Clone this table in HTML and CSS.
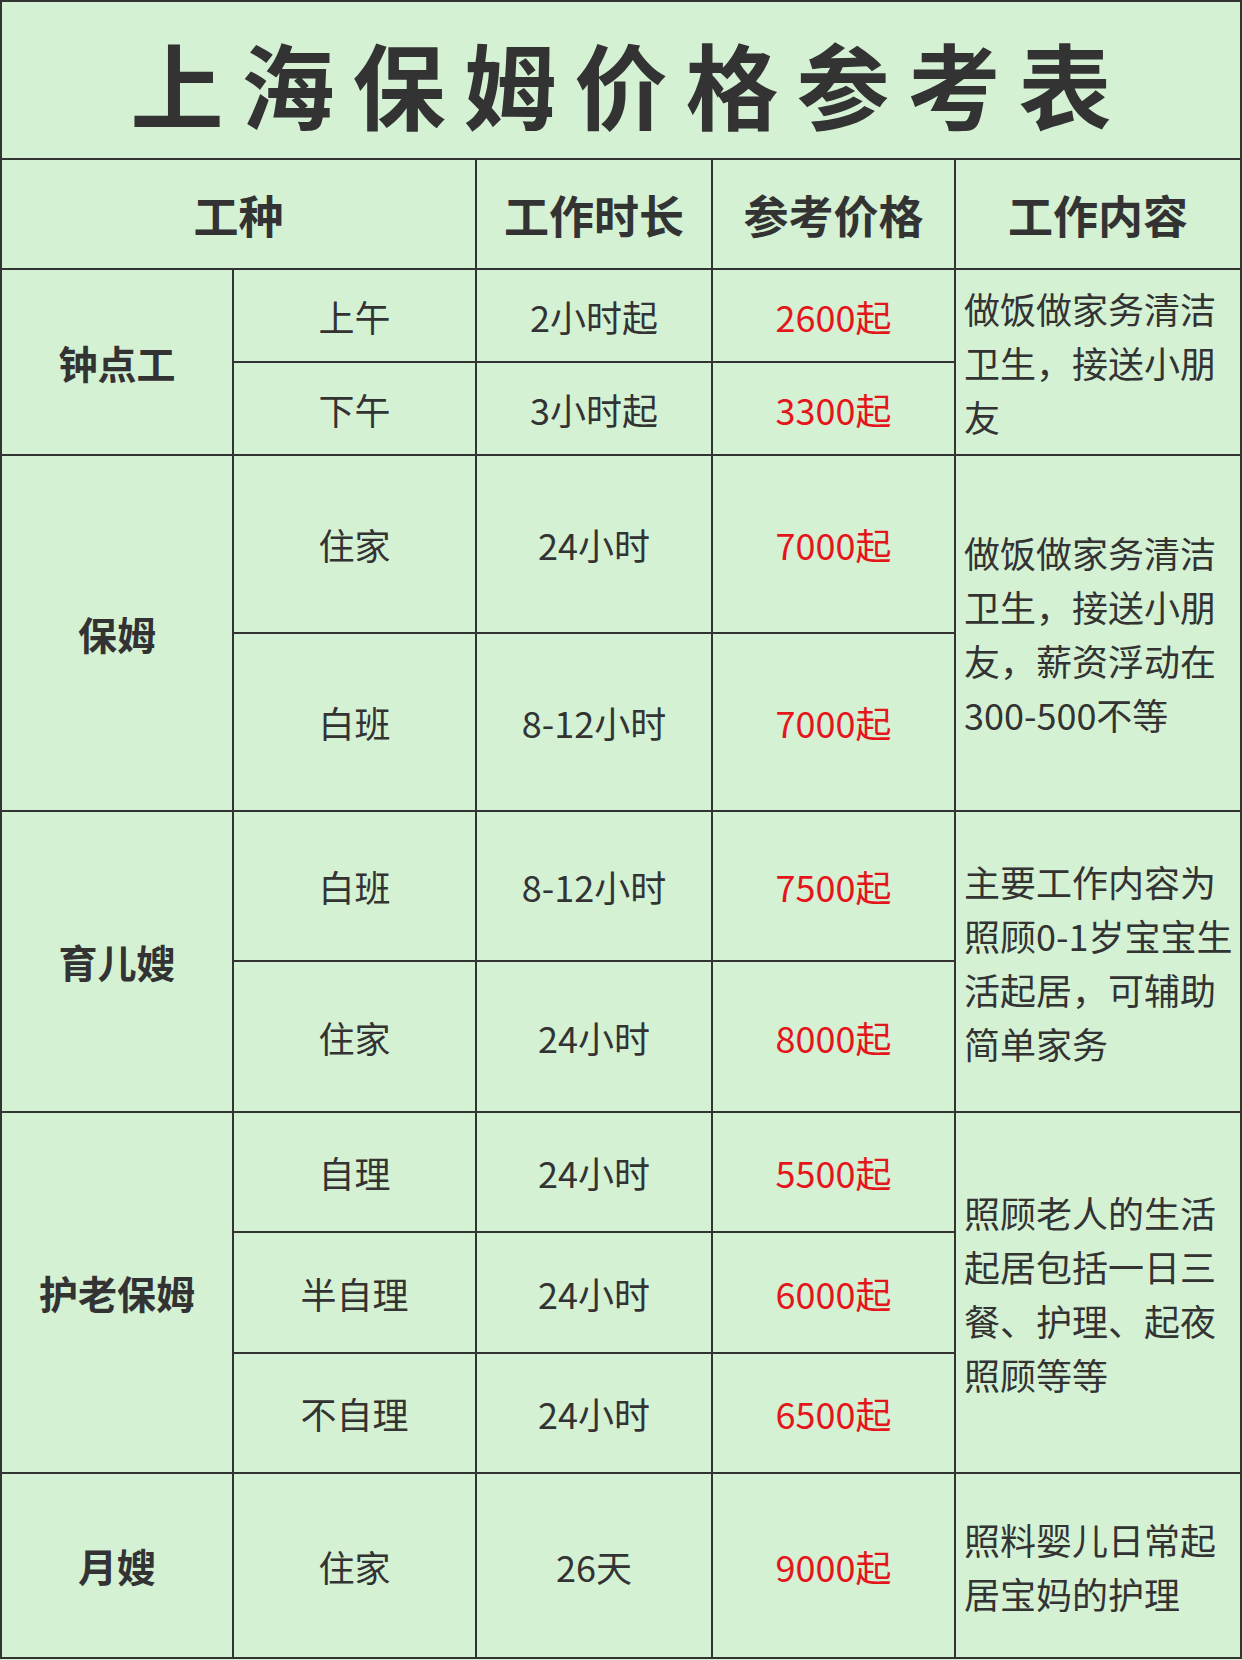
FILE: index.html
```html
<!DOCTYPE html>
<html lang="zh-CN">
<head>
<meta charset="utf-8">
<title>上海保姆价格参考表</title>
<link rel="stylesheet" href="styles.css">
</head>
<body>
<div class="sheet">
  <div class="cell title"><span class="title-text">上海保姆价格参考表</span></div>

  <div class="cell head span2">工种</div>
  <div class="cell head">工作时长</div>
  <div class="cell head">参考价格</div>
  <div class="cell head">工作内容</div>

  <div class="cell label rows2">钟点工</div>
  <div class="cell">上午</div>
  <div class="cell">2小时起</div>
  <div class="cell price">2600起</div>
  <div class="cell desc rows2"><p>做饭做家务清洁<br>卫生，接送小朋<br>友</p></div>
  <div class="cell">下午</div>
  <div class="cell">3小时起</div>
  <div class="cell price">3300起</div>

  <div class="cell label rows2">保姆</div>
  <div class="cell">住家</div>
  <div class="cell">24小时</div>
  <div class="cell price">7000起</div>
  <div class="cell desc rows2"><p>做饭做家务清洁<br>卫生，接送小朋<br>友，薪资浮动在<br>300-500不等</p></div>
  <div class="cell">白班</div>
  <div class="cell">8-12小时</div>
  <div class="cell price">7000起</div>

  <div class="cell label rows2">育儿嫂</div>
  <div class="cell">白班</div>
  <div class="cell">8-12小时</div>
  <div class="cell price">7500起</div>
  <div class="cell desc rows2"><p>主要工作内容为<br>照顾0-1岁宝宝生<br>活起居，可辅助<br>简单家务</p></div>
  <div class="cell">住家</div>
  <div class="cell">24小时</div>
  <div class="cell price">8000起</div>

  <div class="cell label rows3">护老保姆</div>
  <div class="cell">自理</div>
  <div class="cell">24小时</div>
  <div class="cell price">5500起</div>
  <div class="cell desc rows3"><p>照顾老人的生活<br>起居包括一日三<br>餐、护理、起夜<br>照顾等等</p></div>
  <div class="cell">半自理</div>
  <div class="cell">24小时</div>
  <div class="cell price">6000起</div>
  <div class="cell">不自理</div>
  <div class="cell">24小时</div>
  <div class="cell price">6500起</div>

  <div class="cell label">月嫂</div>
  <div class="cell">住家</div>
  <div class="cell">26天</div>
  <div class="cell price">9000起</div>
  <div class="cell desc"><p>照料婴儿日常起<br>居宝妈的护理</p></div>
</div>
</body>
</html>
```

FILE: styles.css
```css
html, body {
  margin: 0;
  padding: 0;
  background: #d4f1d4;
}

body {
  font-family: "Noto Sans CJK SC", "Noto Sans", sans-serif;
  color: #333333;
}

.sheet {
  width: 1242px;
  box-sizing: border-box;
  display: grid;
  grid-template-columns: 230px 241px 234px 241px 284px;
  grid-template-rows: 156px 108px 91px 91px 176px 176px 148px 149px 118px 119px 118px 183px;
  gap: 2px;
  padding: 2px;
  background: #333333;
}

.cell {
  background: #d4f1d4;
  display: flex;
  align-items: center;
  justify-content: center;
  font-size: 36px;
  line-height: 1;
  white-space: nowrap;
}

.title {
  grid-column: 1 / -1;
}

.title-text {
  font-size: 93px;
  font-weight: 700;
  letter-spacing: 18px;
  margin-right: -18px;
  line-height: 1;
  position: relative;
  top: 2px;
}

.head {
  font-size: 45px;
  font-weight: 700;
}

.span2 {
  grid-column: span 2;
}

.rows2 {
  grid-row: span 2;
}

.rows3 {
  grid-row: span 3;
}

.label {
  font-size: 39px;
  font-weight: 700;
}

.price {
  color: #e5161b;
}

.desc {
  justify-content: flex-start;
  padding-left: 8px;
}

.desc p {
  margin: 0;
  font-size: 36px;
  line-height: 54px;
}
```
